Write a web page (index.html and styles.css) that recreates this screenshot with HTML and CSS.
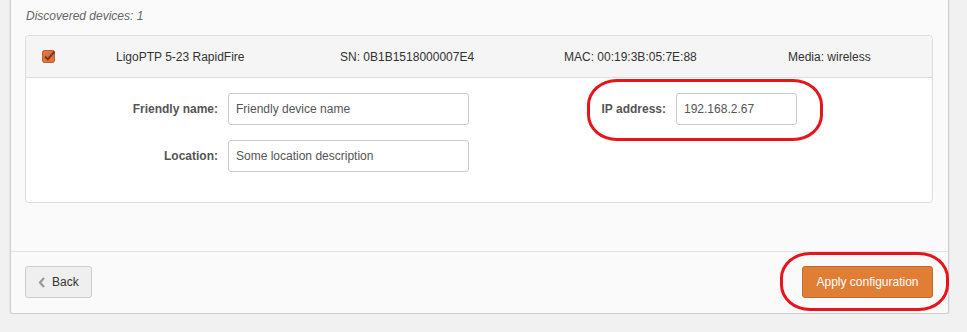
FILE: index.html
```html
<!DOCTYPE html>
<html lang="en">
  <head>
    <meta charset="UTF-8" />
    <meta name="viewport" content="width=device-width, initial-scale=1.0" />
    <title>Discovered devices</title>
    <link rel="stylesheet" href="styles.css">
  </head>
  <body>
    <div class="panel">
      <div class="panel-body">
        <p class="discovered">Discovered devices: 1</p>
        <div class="device">
          <div class="device-head">
            <span class="check">
              <svg width="14" height="14" viewBox="0 0 14 14">
                <rect x="0.5" y="1.5" width="12" height="12" rx="2" fill="#e6713f" stroke="#c05a30" />
                <path d="M3 7.5 L5.8 10.2 L12.5 2.5" fill="none" stroke="#6e3a24" stroke-width="2" />
              </svg>
            </span>
            <span>LigoPTP 5-23 RapidFire</span>
            <span>SN: 0B1B1518000007E4</span>
            <span>MAC: 00:19:3B:05:7E:88</span>
            <span>Media: wireless</span>
          </div>
          <form class="device-form">
            <label for="name">Friendly name:</label>
            <input type="text" id="name" value="Friendly device name" />
            <label for="ip">IP address:</label>
            <input type="text" id="ip" value="192.168.2.67" />
            <label for="location">Location:</label>
            <input type="text" id="location" value="Some location description" />
          </form>
        </div>
      </div>
      <div class="panel-footer">
        <button class="btn btn-back">
          <svg width="8" height="11" viewBox="0 0 8 11">
            <path d="M6 1 L2 5.5 L6 10" fill="none" stroke="#999" stroke-width="2.2" />
          </svg>
          Back
        </button>
        <button class="btn btn-apply">Apply configuration</button>
      </div>
      <div class="mark mark-ip"></div>
      <div class="mark mark-apply"></div>
    </div>
  </body>
</html>
```

FILE: styles.css
```css
body {
  margin: 0;
  background-color: #f1f1f1;
  font-family: "Liberation Sans", Arial, sans-serif;
  font-size: 12px;
  color: #333;
}

.panel {
  position: relative;
  margin: -20px 0 0 10px;
  width: 939px;
  box-sizing: border-box;
  background-color: #fafafa;
  border: 1px solid #cfcfcf;
  border-radius: 3px;
  box-shadow: 0 1px 2px rgba(0, 0, 0, 0.12);
}

.panel-body {
  padding: 27px 15px 48px 14px;
}

.discovered {
  margin: 0 0 11px 1px;
  line-height: 16px;
  font-style: italic;
  color: #666;
}

.device {
  background-color: #fff;
  border: 1px solid #ddd;
  border-radius: 4px;
}

.device-head {
  display: grid;
  grid-template-columns: 74px 224px 224px 224px auto;
  align-items: center;
  height: 41px;
  padding-left: 16px;
  background-color: #f5f5f5;
  border-bottom: 1px solid #ddd;
  border-radius: 4px 4px 0 0;
}

.check svg {
  display: block;
  margin-top: -1px;
}

.device-form {
  display: grid;
  grid-template-columns: 192px 241px 187px 121px;
  column-gap: 10px;
  row-gap: 15px;
  align-items: center;
  padding: 15px 0 30px 0;
}

.device-form label {
  text-align: right;
  font-weight: bold;
  color: #555;
}

.device-form input {
  height: 32px;
  padding: 0 7px;
  box-sizing: border-box;
  border: 1px solid #ccc;
  border-radius: 3px;
  font-family: inherit;
  font-size: 12px;
  color: #555;
  background-color: #fff;
}

.panel-footer {
  display: flex;
  justify-content: space-between;
  padding: 14px 15px 15px 14px;
  border-top: 1px solid #e3e3e3;
}

.btn {
  height: 32px;
  border-radius: 3px;
  font-family: inherit;
  font-size: 12px;
  cursor: pointer;
}

.btn-back {
  display: flex;
  align-items: center;
  gap: 6px;
  width: 67px;
  padding: 0 0 0 12px;
  background-color: #efefef;
  border: 1px solid #ccc;
  color: #333;
}

.btn-apply {
  width: 131px;
  background-color: #e07e36;
  border: 1px solid #c4692a;
  color: #fff;
}

.mark {
  position: absolute;
  border: 3px solid #e8141c;
  box-sizing: border-box;
}

.mark-ip {
  left: 576px;
  top: 98px;
  width: 236px;
  height: 62px;
  border-radius: 30px / 26px;
}

.mark-apply {
  left: 769px;
  top: 271px;
  width: 169px;
  height: 59px;
  border-radius: 30px / 26px;
}
```
